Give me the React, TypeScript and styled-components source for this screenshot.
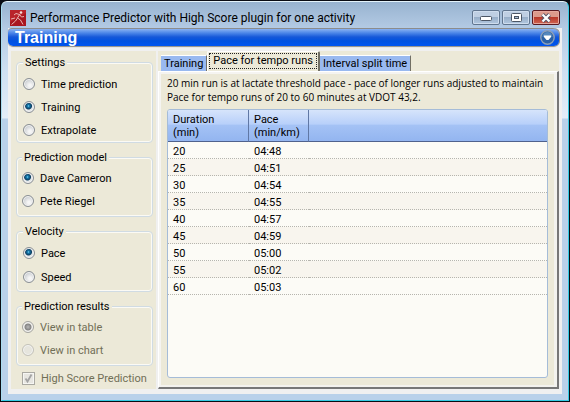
import React from "react";
import styled, { createGlobalStyle, css } from "styled-components";

const GlobalStyle = createGlobalStyle`
  * { box-sizing: border-box; }
  body {
    margin: 0;
    background: #0a0c14;
    font-family: Roboto, "Liberation Sans", Arial, sans-serif;
    font-size: 11px;
    line-height: 13px;
    color: #000;
  }
  button, input { font: inherit; margin: 0; }
`;

const Desktop = styled.div`
  display: flex;
  min-height: 100vh;
  padding: 1px;
`;

const Window = styled.main`
  flex: 1;
  min-width: 0;
  display: flex;
  flex-direction: column;
  padding: 1px 6px 6px;
  border: 1px solid #35cbe4;
  border-top-color: #e4f3fb;
  border-left-color: #a9dcef;
  border-radius: 6px 6px 0 0;
  background: linear-gradient(#98b3d0 0, #b3cae4 26px, #cfe0f2 70px, #e3edf8 116px, #b9d1ea 117px, #b9d1ea 100%);
`;

const TitleBar = styled.header`
  display: flex;
  align-items: center;
  height: 25px;
  padding: 4px 2px 0;
`;

const Title = styled.h1`
  flex: 1;
  margin: 0 0 0 4px;
  font: 400 12px/16px Roboto, "Open Sans", sans-serif;
  white-space: nowrap;
`;

const WindowButtons = styled.div`
  display: flex;
  gap: 2px;
`;

const WindowButton = styled.button<{ $close?: boolean }>`
  display: flex;
  align-items: center;
  justify-content: center;
  width: 28px;
  height: 15px;
  padding: 0;
  border: 1px solid ${(p) => (p.$close ? "#5a1a22" : "#60758f")};
  border-radius: 2px;
  box-shadow: inset 0 0 0 1px ${(p) => (p.$close ? "#e5a79d" : "#cfddee")};
  background: ${(p) =>
    p.$close
      ? "linear-gradient(#dc9a8c 0 45%, #b9392b 50%, #cf6552)"
      : "linear-gradient(#bfcfe3 0 45%, #98afc9 50%, #b3c8e0)"};
`;

const Client = styled.div`
  flex: 1;
  display: flex;
  flex-direction: column;
  gap: 5px;
  padding: 0 3px 5px;
  background: #f0f0f0;
`;

const Banner = styled.div`
  display: flex;
  align-items: center;
  justify-content: space-between;
  height: 18px;
  margin: 0 0 0 -3px;
  padding: 0 4px 0 7px;
  border-top: 1px solid #8c8c8c;
  border-radius: 4px 6px 5px 5px;
  background: linear-gradient(#8ab2f2 0, #4c86e8 4px, #1658d9 8px, #0051e0 12px, #0055f0 100%);
  box-shadow: 0 1px 1px #8f8c85, 1px 0 0 #8b8a89;
`;

const BannerTitle = styled.h2`
  margin: 0;
  font: 700 16px/16px "Liberation Sans", Arial, sans-serif;
  color: #fff;
`;

const MenuButton = styled.button`
  display: flex;
  width: 15px;
  height: 15px;
  padding: 0;
  border: 0;
  background: none;
`;

const Columns = styled.div`
  flex: 1;
  display: flex;
  gap: 2px;
`;

const Sidebar = styled.form`
  width: 145px;
  padding: 5px 3px 4px 5px;
  background: #ece9d8;
`;

const groupPadding = {
  regular: "8px 5px 5px 6px",
  spaced: "8px 5px 7px 6px",
  inset: "7px 5px 8px 5px",
};

const Group = styled.fieldset<{ $kind: keyof typeof groupPadding }>`
  display: flex;
  flex-direction: column;
  gap: ${(p) => (p.$kind === "spaced" ? 10 : 9)}px;
  min-width: 0;
  margin: 0 0 8px;
  padding: ${(p) => groupPadding[p.$kind]};
  border: 1px solid #d0dbe3;
  border-radius: 4px;
  box-shadow: inset 0 0 0 1px #fbfaf5;
`;

const Legend = styled.legend`
  padding: 0 2px;
  background: #ece9d8;
`;

const Option = styled.label<{ $disabled?: boolean }>`
  display: flex;
  align-items: center;
  gap: 6px;
  height: 14px;
  white-space: nowrap;
  color: ${(p) => (p.$disabled ? "#716f57" : "#000")};
`;

const Radio = styled.input.attrs({ type: "radio" })`
  appearance: none;
  flex: none;
  width: 12px;
  height: 12px;
  border: 1px solid #8a8f94;
  border-radius: 50%;
  background: radial-gradient(circle at 60% 65%, #f5f5f5 15%, #c5c9cd 75%);
  box-shadow: inset 0 0 0 1px #f4f4f4;
  &:checked {
    background: radial-gradient(circle at 45% 40%, #8fe0fa 0, #1780b4 1px, #0c3d60 3px, #e2e6e8 4px);
  }
  &:disabled {
    border-color: #c3c2b9;
    background: #e6e5dd;
  }
  &:disabled:checked {
    border-color: #a5a5a0;
    background: radial-gradient(circle, #b8b8b8 0, #858585 3px, #ecebe5 4px);
  }
`;

const CheckOption = styled(Option)`
  padding-left: 6px;
  margin-top: -3px;
`;

const CheckHolder = styled.span`
  display: grid;
  width: 13px;
  height: 13px;
  > * { grid-area: 1 / 1; }
  svg { pointer-events: none; }
`;

const CheckBox = styled.input.attrs({ type: "checkbox" })`
  appearance: none;
  width: 13px;
  height: 13px;
  border: 1px solid #aaa9a2;
  background: #e7e6e1;
  box-shadow: inset 0 0 0 1px #f6f6f3;
`;

const Content = styled.section`
  flex: 1;
  min-width: 0;
  display: flex;
  flex-direction: column;
`;

const TabStrip = styled.div`
  display: flex;
  align-items: flex-end;
  height: 20px;
  padding-left: 3px;
  background: #ece9d8;
`;

const Tab = styled.button<{ $active?: boolean }>`
  height: 16px;
  padding: 0 3px;
  border: 0;
  border-top: 1px solid #fff;
  border-right: 1px solid #716f64;
  background: #99b9f0;
  white-space: nowrap;
  text-align: left;
  ${(p) =>
    p.$active &&
    css`
      height: 20px;
      padding: 1px 1px 2px;
      border-left: 1px solid #fff;
      border-right-width: 2px;
      border-radius: 2px 2px 0 0;
      background: #ece9d8;
    `}
`;

const FocusText = styled.span`
  display: block;
  padding: 0 3px 1px;
  border: 1px dotted #222;
`;

const TabPage = styled.div`
  flex: 1;
  display: flex;
  flex-direction: column;
  padding: 4px 9px 9px 7px;
  border: 2px solid #777;
  border-top: 1px solid #fff;
  border-left: 1px solid #fff;
  background: #ece9d8;
  box-shadow: inset 2px 2px 0 #f5f4f1, inset -3px -2px 0 #f3f2ee;
`;

const Description = styled.p`
  margin: 0;
  padding-left: 1px;
  font: 10px/14px "Open Sans", "Noto Sans", sans-serif;
  white-space: pre-line;
`;

const TableFrame = styled.div`
  flex: 1;
  margin: 5px 0 0 1px;
  overflow: hidden;
  border: 1px solid #a5bcd8;
  border-radius: 3px;
  background: #fcfbf6;
`;

const Table = styled.table`
  width: 100%;
  table-layout: fixed;
  border-collapse: separate;
  border-spacing: 0;
`;

const HeadCell = styled.th<{ $width?: number }>`
  width: ${(p) => (p.$width ? `${p.$width}px` : "auto")};
  height: 32px;
  padding: 3px 4px 2px 5px;
  text-align: left;
  vertical-align: top;
  font-weight: 400;
  border-bottom: 1px solid #50628d;
  border-right: ${(p) => (p.$width ? "1px solid #6078a5" : "0")};
  background: linear-gradient(#d6e4fb 0, #b8d0fa 45%, #a4c2f5 50%, #93b5f0 100%);
`;

const Row = styled.tr`
  &:nth-child(even) { background: #f8f5ee; }
`;

const Cell = styled.td`
  height: 17px;
  padding: 2px 4px 0 5px;
  border-bottom: 1px dotted #b6b5ae;
`;

type Choice = { label: string; checked?: boolean };
type GroupData = { name: string; kind: keyof typeof groupPadding; choices: Choice[]; disabled?: boolean };

const groups: GroupData[] = [
  { name: "Settings", kind: "regular", choices: [{ label: "Time prediction" }, { label: "Training", checked: true }, { label: "Extrapolate" }] },
  { name: "Prediction model", kind: "inset", choices: [{ label: "Dave Cameron", checked: true }, { label: "Pete Riegel" }] },
  { name: "Velocity", kind: "spaced", choices: [{ label: "Pace", checked: true }, { label: "Speed" }] },
  { name: "Prediction results", kind: "inset", disabled: true, choices: [{ label: "View in table", checked: true }, { label: "View in chart" }] },
];

const rows = [
  ["20", "04:48"], ["25", "04:51"], ["30", "04:54"], ["35", "04:55"], ["40", "04:57"],
  ["45", "04:59"], ["50", "05:00"], ["55", "05:02"], ["60", "05:03"],
];

const RunnerIcon = () => (
  <svg width="16" height="16" viewBox="0 0 16 16" aria-hidden="true">
    <rect width="16" height="16" fill="#a91620" />
    <path d="M0 0h16v3L0 12z" fill="#b9232a" />
    <g fill="none" stroke="#e9b5b2" strokeWidth="1">
      <path d="M10 4 7.5 8l3 2 2.5 4.5M7.500 8 5.500 11 1.500 14.500M4 5l2-1.500 3.500 1 2 2.500 2.500-.5M1 9l4-1" />
    </g>
    <circle cx="11" cy="2.500" r="1.300" fill="#f6dedb" />
  </svg>
);

export default function App() {
  return (
    <>
      <GlobalStyle />
      <Desktop>
        <Window>
          <TitleBar>
            <RunnerIcon />
            <Title>Performance Predictor with High Score plugin for one activity</Title>
            <WindowButtons>
              <WindowButton type="button" aria-label="Minimize">
                <svg width="12" height="6" viewBox="0 0 12 6">
                  <rect x=".5" y="1.5" width="11" height="4" rx="1" fill="#fff" stroke="#4c5665" />
                </svg>
              </WindowButton>
              <WindowButton type="button" aria-label="Maximize">
                <svg width="11" height="9" viewBox="0 0 11 9">
                  <rect x=".5" y=".5" width="10" height="8" rx="1" fill="#fff" stroke="#4c5665" />
                  <rect x="3.5" y="3.5" width="4" height="2" fill="#a9bdd4" stroke="#4c5665" />
                </svg>
              </WindowButton>
              <WindowButton type="button" aria-label="Close" $close>
                <svg width="12" height="10" viewBox="0 0 12 10">
                  <path d="m2.5 1.5 7 7m0-7-7 7" stroke="#565466" strokeWidth="4" />
                  <path d="m2.5 1.5 7 7m0-7-7 7" stroke="#fff" strokeWidth="2.2" />
                </svg>
              </WindowButton>
            </WindowButtons>
          </TitleBar>
          <Client>
            <Banner>
              <BannerTitle>Training</BannerTitle>
              <MenuButton type="button" aria-label="Show menu">
                <svg width="15" height="15" viewBox="0 0 15 15">
                  <circle cx="7.5" cy="7.5" r="6.7" fill="#2c61a6" stroke="#8d9fb6" strokeWidth="1.4" />
                  <path d="M2.5 7a5 5 0 0 1 10 0z" fill="#5688bd" />
                  <path d="M4 5.500h7v1.500L8.500 10h-2L4 7z" fill="#fff" />
                </svg>
              </MenuButton>
            </Banner>
            <Columns>
              <Sidebar>
                {groups.map((g) => (
                  <Group key={g.name} $kind={g.kind} disabled={g.disabled}>
                    <Legend>{g.name}</Legend>
                    {g.choices.map((c) => (
                      <Option key={c.label} $disabled={g.disabled}>
                        <Radio name={g.name} defaultChecked={c.checked} />
                        {c.label}
                      </Option>
                    ))}
                  </Group>
                ))}
                <CheckOption $disabled>
                  <CheckHolder>
                    <CheckBox defaultChecked disabled />
                    <svg width="13" height="13" viewBox="0 0 13 13" aria-hidden="true">
                      <path d="m3.5 6.5 2 3 4-7" fill="none" stroke="#a3a3a3" strokeWidth="1.8" />
                    </svg>
                  </CheckHolder>
                  High Score Prediction
                </CheckOption>
              </Sidebar>
              <Content>
                <TabStrip role="tablist">
                  <Tab type="button" role="tab">Training</Tab>
                  <Tab type="button" role="tab" aria-selected="true" $active>
                    <FocusText>Pace for tempo runs</FocusText>
                  </Tab>
                  <Tab type="button" role="tab">Interval split time</Tab>
                </TabStrip>
                <TabPage role="tabpanel">
                  <Description>
                    {"20 min run is at lactate threshold pace - pace of longer runs adjusted to maintain\nPace for tempo runs of 20 to 60 minutes at VDOT 43,2."}
                  </Description>
                  <TableFrame>
                    <Table>
                      <thead>
                        <tr>
                          <HeadCell scope="col" $width={81}>Duration<br />(min)</HeadCell>
                          <HeadCell scope="col" $width={60}>Pace<br />(min/km)</HeadCell>
                          <HeadCell aria-hidden="true" />
                        </tr>
                      </thead>
                      <tbody>
                        {rows.map(([duration, pace]) => (
                          <Row key={duration}>
                            <Cell>{duration}</Cell>
                            <Cell>{pace}</Cell>
                            <Cell />
                          </Row>
                        ))}
                      </tbody>
                    </Table>
                  </TableFrame>
                </TabPage>
              </Content>
            </Columns>
          </Client>
        </Window>
      </Desktop>
    </>
  );
}
